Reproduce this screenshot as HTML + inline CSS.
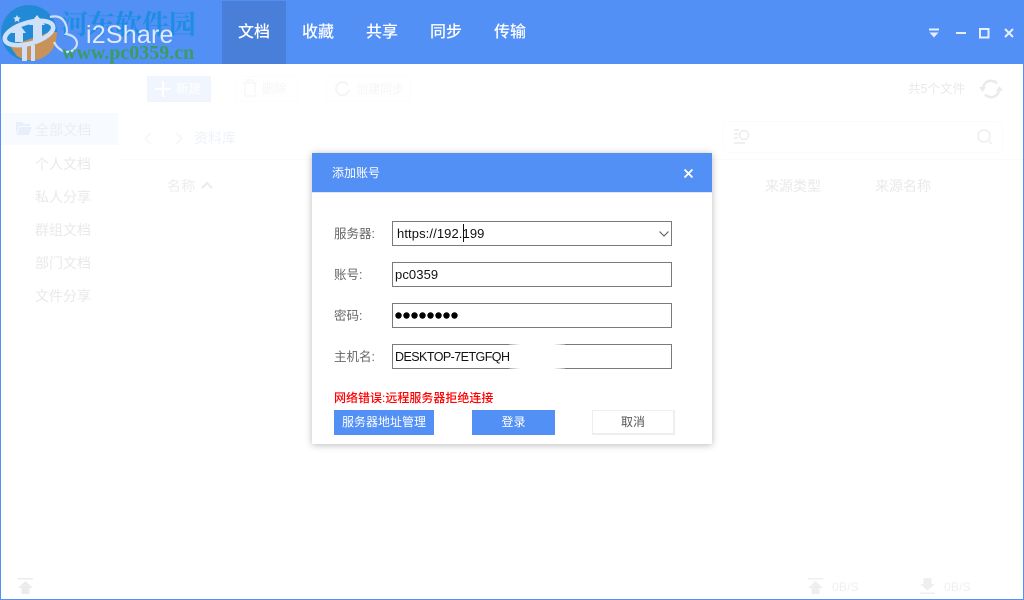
<!DOCTYPE html>
<html lang="zh"><head><meta charset="utf-8"><title>i2Share</title>
<style>
*{box-sizing:border-box}
html,body{margin:0;padding:0;width:1024px;height:600px;overflow:hidden;background:#fff}
body{position:relative;font-family:"Liberation Sans","Noto Sans CJK SC",sans-serif}
.a{position:absolute;white-space:nowrap}
.tab{top:21px;font-size:16px;line-height:24px;color:#fff;font-weight:500;width:64px;text-align:center}
.g{color:#e9e9e9;font-size:13px;line-height:18px}
.lb{color:#666;font-size:12.500px;line-height:18px;left:334px}
.in{left:392px;width:280px;height:25px;border:1px solid #7a7a7a;background:#fff;color:#111;font-size:13px;line-height:23px;padding-left:2px}
svg{position:absolute;display:block;overflow:visible}
</style></head><body>
<div class="a" style="left:0;top:0;width:1024px;height:64px;background:#5290f5"></div>
<div class="a" style="left:222px;top:1px;width:64px;height:63px;background:#4a7fd9"></div>
<div class="a tab" style="left:222px">文档</div>
<div class="a tab" style="left:286px">收藏</div>
<div class="a tab" style="left:350px">共享</div>
<div class="a tab" style="left:414px">同步</div>
<div class="a tab" style="left:478px">传输</div>

<div class="a" style="left:61px;top:8px;font-family:'Liberation Serif','Noto Serif CJK SC',serif;font-weight:700;font-size:27px;line-height:34px;color:#1d8de4">河东软件园</div>
<svg style="left:0;top:0" width="220" height="64" viewBox="0 0 220 64">
<circle cx="29" cy="33" r="28" fill="#2289d6"/>
<path d="M10 46L50 32L57 32Q57 52 40 59Q28 63 17 56Z" fill="#c9925a"/>
<path d="M22 46H27V61H22ZM31 45H35V61H31Z" fill="#cfe1f8"/>
<ellipse cx="29" cy="33" rx="25" ry="10.500" transform="rotate(-16 29 33)" fill="none" stroke="#cfe1f8" stroke-width="4.500"/>
<path d="M11 33L19 24L26 33H23V42H15V33ZM37 15L45 25H42V41H33V25H29Z" fill="#cfe1f8"/>
<path d="M50 17Q62 14 66 25Q68 32 66 34Q77 36 77 44Q75 52 66 52Q58 50 54 42" fill="none" stroke="#e4efff" stroke-width="2.200" opacity=".85"/>
<path d="M17 15l1.200 2.300 2.500.5-1.800 1.700.4 2.500-2.300-1.200-2.300 1.200.4-2.500-1.800-1.700 2.500-.5z" fill="#cfe1f8"/>
</svg>
<div class="a" style="left:86px;top:19px;font-size:25px;line-height:32px;color:#dfeaff;letter-spacing:.2px">i2Share</div>
<div class="a" style="left:62px;top:42px;font-family:'Liberation Serif',serif;font-weight:700;font-size:20px;line-height:22px;color:#3a9c62">www.pc0359.cn</div>

<svg style="left:928px;top:28px" width="90" height="12" viewBox="0 0 90 12" fill="none" stroke="#e6efff">
<path d="M1 1.500H11" stroke-width="2"/><path d="M1.500 4.500H10.500L6 9.500Z" fill="#e6efff" stroke="none"/>
<path d="M28 5H38" stroke-width="2"/>
<rect x="52" y="1" width="8.500" height="8.500" stroke-width="2"/>
<path d="M77 1L85 9M85 1L77 9" stroke-width="2"/>
</svg>

<!-- toolbar -->
<div class="a" style="left:147px;top:76px;width:64px;height:26px;background:#f0f5fe;border:1px solid #eef3fd;border-radius:2px"></div>
<svg style="left:155px;top:81px" width="16" height="16"><path d="M8 0V16M0 8H16" stroke="#fff" stroke-width="2"/></svg>
<div class="a" style="left:176px;top:80px;font-size:12.500px;line-height:18px;color:#fff">新建</div>
<div class="a" style="left:235px;top:76px;width:63px;height:26px;border:1px solid #fcfcfc;border-radius:3px"></div>
<svg style="left:243px;top:80px" width="14" height="17" fill="none" stroke="#f7f7f7" stroke-width="1.500"><path d="M0 3H14M4 3V0H10V3M2 3V16H12V3"/></svg>
<div class="a" style="left:262px;top:80px;font-size:12.500px;line-height:18px;color:#f6f6f6">删除</div>
<div class="a" style="left:326px;top:76px;width:85px;height:26px;border:1px solid #fcfcfc;border-radius:3px"></div>
<svg style="left:336px;top:82px" width="14" height="14" fill="none" stroke="#f5f5f5" stroke-width="2"><path d="M12 3A6.500 6.500 0 1 0 13 8"/></svg>
<div class="a" style="left:356px;top:80px;font-size:12px;line-height:18px;color:#f6f6f6">创建同步</div>
<div class="a g" style="left:908px;top:80px;font-size:12.500px">共5个文件</div>
<svg style="left:979px;top:77px" width="24" height="24" viewBox="0 0 24 24" fill="none" stroke="#ebebeb" stroke-width="2.500"><path d="M4 12A8 8 0 0 1 18 6.500M20 12A8 8 0 0 1 6 17.500"/><path d="M0 10H7L3.500 15ZM17 14H24L20.500 9Z" fill="#ebebeb" stroke="none"/></svg>

<!-- sidebar -->
<div class="a" style="left:1px;top:113px;width:117px;height:32px;background:#f7faff"></div>
<svg style="left:16px;top:122px" width="16" height="14"><path d="M0 0H6L8 2H14V4H3L0 13ZM3.500 5H16L13 13H1Z" fill="#e9effa"/></svg>
<div class="a g" style="left:35px;top:121px;letter-spacing:.1px;color:#ebedf0;font-size:14px">全部文档</div>
<div class="a g" style="left:35px;top:155px;font-size:14px">个人文档</div>
<div class="a g" style="left:35px;top:188px;font-size:14px">私人分享</div>
<div class="a g" style="left:35px;top:221px;font-size:14px">群组文档</div>
<div class="a g" style="left:35px;top:254px;font-size:14px">部门文档</div>
<div class="a g" style="left:35px;top:287px;font-size:14px">文件分享</div>

<!-- breadcrumb -->
<svg style="left:144px;top:132px" width="40" height="13" fill="none" stroke="#f6f6f6" stroke-width="1.500"><path d="M7 1L1 6.500L7 12M32 1L38 6.500L32 12"/></svg>
<div class="a" style="left:194px;top:129px;font-size:14px;line-height:18px;color:#edf2fb">资料库</div>
<div class="a" style="left:723px;top:121px;width:280px;height:32px;border:1px solid #fbfbfb;border-radius:6px"></div>
<svg style="left:734px;top:129px" width="17" height="16" fill="none" stroke="#ececec" stroke-width="1.500"><path d="M0 1H5M0 5H4M0 9H4M0 14H11"/><circle cx="10" cy="6" r="4.500"/></svg>
<svg style="left:977px;top:129px" width="16" height="16" fill="none" stroke="#f2f2f2" stroke-width="2"><circle cx="7" cy="7" r="6"/><path d="M11 11L15 15"/></svg>
<div class="a" style="left:120px;top:159px;width:904px;height:1px;background:#fbfbfb"></div>
<div class="a g" style="left:167px;top:177px;font-size:14px;color:#ededed;letter-spacing:.3px">名称</div>
<svg style="left:201px;top:181px" width="12" height="8" fill="none" stroke="#ebebeb" stroke-width="2"><path d="M1 7L6 2L11 7"/></svg>
<div class="a g" style="left:765px;top:177px;font-size:14px">来源类型</div>
<div class="a g" style="left:875px;top:177px;font-size:14px">来源名称</div>

<!-- status bar -->
<svg style="left:17px;top:578px" width="16" height="16" fill="#ececec"><path d="M1 0H16V1.500H1ZM8.500 3L16 10H12.500V16H4.500V10H1Z"/></svg>
<svg style="left:807px;top:578px" width="16" height="16" fill="#efefef"><path d="M1 0H16V1.500H1ZM8.500 3L16 10H12.500V16H4.500V10H1Z"/></svg>
<div class="a" style="left:832px;top:579px;font-size:12px;line-height:16px;color:#efefef;letter-spacing:.2px">0B/S</div>
<svg style="left:919px;top:578px" width="16" height="16" fill="#efefef"><path d="M4.500 0H12.500V6H16L8.500 12.500L1 6H4.500ZM1 14.500H16V16H1Z"/></svg>
<div class="a" style="left:944px;top:579px;font-size:12px;line-height:16px;color:#efefef;letter-spacing:.2px">0B/S</div>

<!-- dialog -->
<div class="a" style="left:312px;top:153px;width:400px;height:291px;background:#fff;box-shadow:0 1px 7px rgba(0,0,0,.28)"></div>
<div class="a" style="left:312px;top:153px;width:400px;height:40px;background:#5290f5;border-bottom:1px solid #dfe8f8"></div>
<div class="a" style="left:332px;top:164px;font-size:12px;line-height:18px;color:#fff">添加账号</div>
<svg style="left:684px;top:169px" width="9" height="9"><path d="M.5.5L8.500 8.500M8.500.5L.5 8.500" stroke="#fff" stroke-width="1.800"/></svg>

<div class="a lb" style="top:225px">服务器:</div>
<div class="a in" style="top:221px;padding-left:4px;letter-spacing:.1px">https://192.199</div>
<div class="a" style="left:463px;top:224px;width:1px;height:18px;background:#111"></div>
<svg style="left:659px;top:231px" width="10" height="6" fill="none" stroke="#666" stroke-width="1.200"><path d="M.5.5L5 5L9.500.5"/></svg>

<div class="a lb" style="top:266px">账号:</div>
<div class="a in" style="top:262px;letter-spacing:.1px">pc0359</div>
<div class="a lb" style="top:307px">密码:</div>
<div class="a in" style="top:303px"></div>
<svg style="left:395px;top:311px" width="64" height="9" fill="#000"><circle cx="3.500" cy="4.500" r="3.200"/><circle cx="11.500" cy="4.500" r="3.200"/><circle cx="19.500" cy="4.500" r="3.200"/><circle cx="27.500" cy="4.500" r="3.200"/><circle cx="35.500" cy="4.500" r="3.200"/><circle cx="43.500" cy="4.500" r="3.200"/><circle cx="51.500" cy="4.500" r="3.200"/><circle cx="59.500" cy="4.500" r="3.200"/></svg>
<div class="a lb" style="top:348px">主机名:</div>
<div class="a in" style="top:344px;font-size:12.500px;line-height:24px;letter-spacing:-.55px">DESKTOP-7ETGFQH</div>
<div class="a" style="left:509px;top:342px;width:56px;height:29px;background:radial-gradient(ellipse at 50% 50%,#fff 72%,rgba(255,255,255,0) 100%)"></div>

<div class="a" style="left:334px;top:389px;font-size:12px;line-height:18px;color:#f00;font-weight:500">网络错误:远程服务器拒绝连接</div>
<div class="a" style="left:334px;top:410px;width:100px;height:25px;background:#5290f5;color:#fff;font-size:12px;line-height:25px;text-align:center">服务器地址管理</div>
<div class="a" style="left:472px;top:410px;width:83px;height:25px;background:#5290f5;color:#fff;font-size:12px;line-height:25px;text-align:center">登录</div>
<div class="a" style="left:592px;top:410px;width:83px;height:25px;background:#fff;border:1px solid #eee;border-right-width:2px;border-bottom-width:2px;color:#555;font-size:12px;line-height:23px;text-align:center">取消</div>

<div class="a" style="left:0;top:0;width:1024px;height:600px;border:1px solid #5290f5;border-top:0;pointer-events:none"></div>
</body></html>
